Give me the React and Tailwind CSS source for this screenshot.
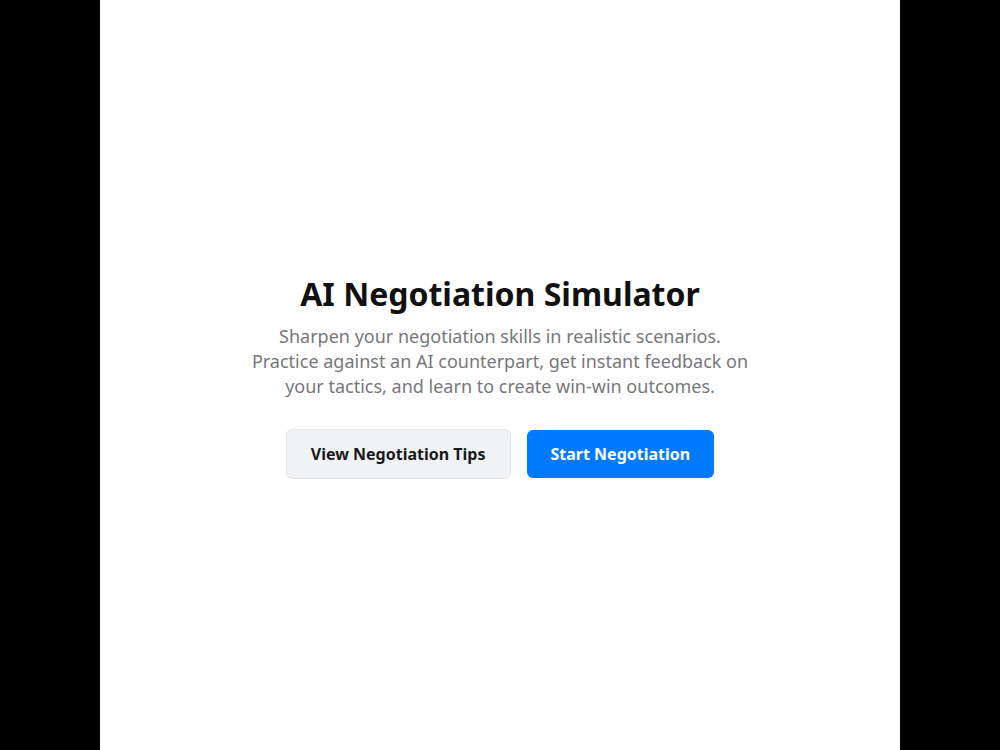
import React from 'react';

const App = () => {
    return (
        <div className="min-h-screen bg-black px-[10%] flex font-['Noto_Sans',sans-serif]">
            <main className="flex-1 bg-white pt-0.5 flex flex-col items-center justify-center text-center">
                <h1 className="text-[32px] leading-10 font-bold text-[#111111]">AI Negotiation Simulator</h1>
                <p className="mt-2.5 max-w-[500px] text-lg leading-[25px] text-[#77777b]">
                    Sharpen your negotiation skills in realistic scenarios. Practice against an AI counterpart, get instant feedback on your tactics, and learn to create win-win outcomes.
                </p>
                <div className="mt-[30px] flex items-center gap-4">
                    <button type="button" className="h-[50px] px-6 rounded-md border border-[#e5e5e8] bg-[#f1f2f5] text-base font-bold text-[#1a1a1a]">
                        View Negotiation Tips
                    </button>
                    <button type="button" className="h-12 px-6 rounded-md bg-[#007bff] text-base font-bold text-white">
                        Start Negotiation
                    </button>
                </div>
            </main>
        </div>
    );
};

export default App;
